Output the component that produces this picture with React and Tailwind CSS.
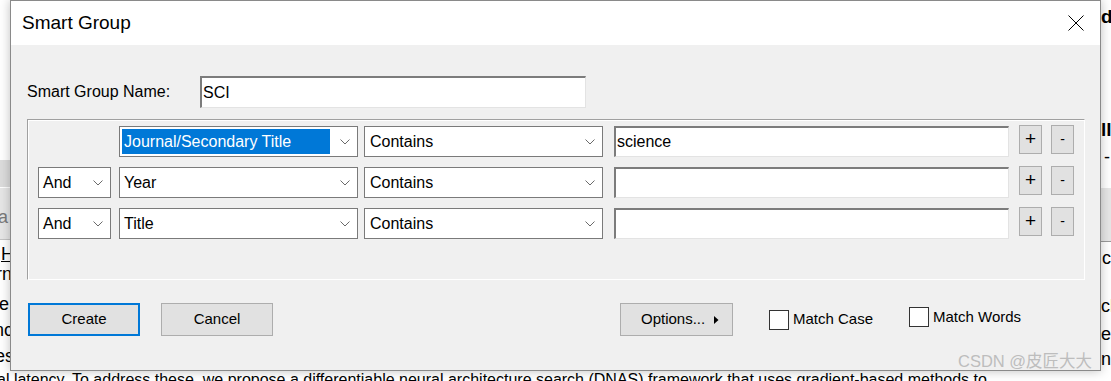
import React from "react";

function Chevron() {
  return (
    <svg width="10" height="6" viewBox="0 0 10 6" className="shrink-0">
      <path d="M0.5 0.5 L5 5 L9.5 0.5" stroke="#6a6a6a" strokeWidth="1" fill="none" />
    </svg>
  );
}

function Select({ className, label, pl, highlight }) {
  return (
    <div className={`flex h-[31px] shrink-0 items-center justify-between border border-[#7a7a7a] bg-white pr-[7px] ${className}`}>
      {highlight ? (
        <div className="ml-[2px] flex h-[25px] w-[208px] items-center bg-[#0078d7] pl-[2px] text-white">{label}</div>
      ) : (
        <span className={pl}>{label}</span>
      )}
      <Chevron />
    </div>
  );
}

function SmallBtn({ children, className }) {
  return (
    <div className={`-mt-[4px] flex h-[29px] w-[23px] shrink-0 items-center justify-center border border-[#adadad] bg-[#e1e1e1] text-black ${className}`}>
      {children}
    </div>
  );
}

function Row({ field, value, first, highlight }) {
  return (
    <div className="flex h-[31px] items-center">
      {first ? (
        <div className="w-[73px] shrink-0" />
      ) : (
        <Select className="w-[73px]" label="And" pl="pl-[4px]" />
      )}
      <Select className="ml-[8px] w-[239px]" label={field} pl="pl-[4px]" highlight={highlight} />
      <Select className="ml-[6px] w-[239px]" label="Contains" pl="pl-[5px]" />
      <div className="ml-[11px] flex h-[31px] w-[395px] shrink-0 items-center border-t-2 border-l-2 border-r border-b border-t-[#7c7c7c] border-l-[#7c7c7c] border-r-[#e3e3e3] border-b-[#e3e3e3] bg-white pl-[1px]">
        {value}
      </div>
      <SmallBtn className="ml-[10px] text-[19px]">+</SmallBtn>
      <SmallBtn className="ml-[9px] text-[14px]">-</SmallBtn>
    </div>
  );
}

function CheckBox() {
  return <div className="h-[20px] w-[20px] shrink-0 border border-[#333333] bg-white" />;
}

export default function App() {
  return (
    <div className="relative h-[381px] w-[1111px] overflow-hidden bg-white font-['Liberation_Sans','Noto_Sans_CJK_SC',sans-serif] text-black">
      {/* background document (window behind the dialog) */}
      <div className="absolute left-0 top-[160px] h-[27px] w-[12px] bg-[#dcdcdc]" />
      <div className="absolute left-0 top-[188px] h-[51px] w-[12px] bg-[#e6e6e6]" />
      <div className="absolute left-0 top-[239px] h-[1px] w-[12px] bg-[#c4c4c4]" />
      <div className="absolute left-[1098px] top-[188px] h-[53px] w-[13px] bg-[#e6e6e6]" />
      <div className="absolute left-[1098px] top-[241px] h-[1px] w-[13px] bg-[#9a9a9a]" />
      <span className="absolute left-[-8px] top-[208px] text-[18px] leading-none text-[#7a7a7a]">ra</span>
      <span className="absolute left-[1px] top-[245px] text-[18px] leading-none underline">H</span>
      <span className="absolute left-[-4px] top-[265px] text-[18px] leading-none">rn</span>
      <span className="absolute left-[-1px] top-[295px] text-[18px] leading-none">e</span>
      <span className="absolute left-[-6px] top-[321px] text-[18px] leading-none">nc</span>
      <span className="absolute left-[-5px] top-[347px] text-[18px] leading-none">es</span>

      <span className="absolute left-[1101px] top-[7px] text-[19px] font-bold leading-none">d</span>
      <span className="absolute left-[1101px] top-[120px] text-[19px] font-bold leading-none">ll</span>
      <span className="absolute left-[1104px] top-[148px] text-[18px] leading-none">-</span>
      <span className="absolute left-[1102px] top-[249px] text-[18px] leading-none">c</span>
      <span className="absolute left-[1101px] top-[297px] text-[18px] leading-none">ch</span>
      <span className="absolute left-[1101px] top-[325px] text-[18px] leading-none">e</span>
      <span className="absolute left-[1101px] top-[350px] text-[18px] leading-none">nc</span>
      <span className="absolute left-[-3px] top-[372px] whitespace-nowrap text-[16px] leading-none">
        al latency. To address these, we propose a differentiable neural architecture search (DNAS) framework that uses gradient-based methods to
      </span>

      {/* dialog window */}
      <div className="absolute left-[10px] top-0 flex h-[371px] w-[1091px] flex-col border border-[#8a8a8a] shadow-[0_0_10px_rgba(0,0,0,0.25)]">
        <div className="flex h-[44px] shrink-0 items-center justify-between bg-white pl-[11px] pr-[16px]">
          <span className="text-[19px]">Smart Group</span>
          <svg width="16" height="16" viewBox="0 0 16 16">
            <path d="M0.5 0.5 L15.5 15.5 M15.5 0.5 L0.5 15.5" stroke="#000" strokeWidth="1" fill="none" />
          </svg>
        </div>
        <div className="flex flex-1 flex-col bg-[#f0f0f0] pl-[16px] text-[16px]">
          <div className="mt-[31px] flex items-center">
            <span className="w-[173px] shrink-0">Smart Group Name:</span>
            <div className="flex h-[32px] w-[386px] items-center border-t-2 border-l-2 border-r border-b border-t-[#7c7c7c] border-l-[#7c7c7c] border-r-[#e3e3e3] border-b-[#e3e3e3] bg-white pl-[1px]">
              SCI
            </div>
          </div>

          <div className="mt-[11px] flex h-[161px] w-[1058px] flex-col gap-[10px] border border-t-[#a0a0a0] border-l-[#a0a0a0] border-r-white border-b-white pl-[10px] pt-[6px] shadow-[inset_1px_1px_0_#ffffff]">
            <Row first highlight field="Journal/Secondary Title" value="science" />
            <Row field="Year" value="" />
            <Row field="Title" value="" />
          </div>

          <div className="mt-[23px] flex items-center text-[15px]">
            <div className="ml-[1px] flex h-[33px] w-[112px] items-center justify-center border-2 border-[#0078d7] bg-[#e1e1e1]">Create</div>
            <div className="ml-[21px] flex h-[33px] w-[112px] items-center justify-center border border-[#adadad] bg-[#e1e1e1]">Cancel</div>
            <div className="ml-[347px] flex h-[33px] w-[113px] items-center border border-[#adadad] bg-[#e1e1e1] pl-[20px]">
              <span>Options...</span>
              <svg width="5" height="8" viewBox="0 0 5 8" className="ml-[9px]">
                <path d="M0 0 L4.5 4 L0 8 Z" fill="#000" />
              </svg>
            </div>
            <div className="ml-[36px] flex w-[140px] items-center">
              <CheckBox />
              <span className="ml-[4px]">Match Case</span>
            </div>
            <div className="mb-[5px] flex items-center">
              <CheckBox />
              <span className="ml-[4px]">Match Words</span>
            </div>
          </div>
        </div>
      </div>

      <span className="absolute left-[958px] top-[353px] whitespace-nowrap text-[16.5px] leading-none text-[#bdbdbd]">CSDN @皮匠大大</span>
    </div>
  );
}
